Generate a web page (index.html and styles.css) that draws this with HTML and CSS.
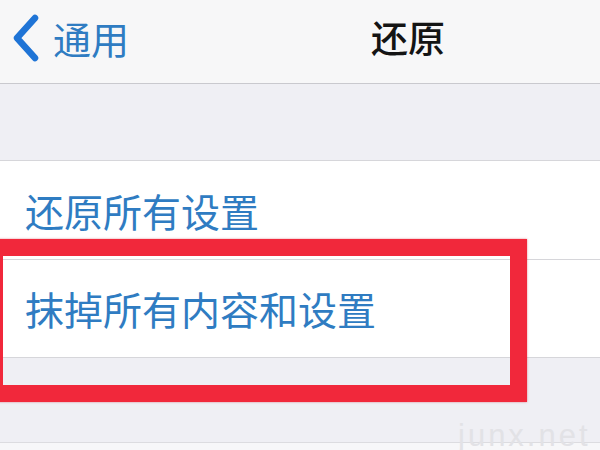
FILE: index.html
```
<!DOCTYPE html>
<html lang="zh-CN">
<head>
<meta charset="utf-8">
<title>还原</title>
<link rel="stylesheet" href="styles.css">
</head>
<body>
<div class="screen">
  <header class="nav">
    <div class="back">
      <svg class="chevron" width="30" height="48" viewBox="0 0 30 48" aria-hidden="true">
        <path d="M24 4 L6 24 L24 44" fill="none" stroke="#1f74d6" stroke-width="6.5" stroke-linecap="round" stroke-linejoin="round"/>
      </svg>
      <span class="back-text">通用</span>
    </div>
    <div class="title">还原</div>
  </header>
  <div class="gap-top"></div>
  <section class="group">
    <div class="row"><span class="row-text">还原所有设置</span></div>
    <div class="row"><span class="row-text">抹掉所有内容和设置</span></div>
  </section>
  <div class="gap-bottom"></div>
  <div class="after"></div>
  <div class="highlight"></div>
  <div class="watermark">junx.net</div>
</div>
</body>
</html>
```
FILE: styles.css
```
html, body {
  margin: 0;
  padding: 0;
}
body {
  width: 600px;
  height: 450px;
  overflow: hidden;
  background: #ffffff;
  font-family: "Noto Sans CJK SC", "Noto Sans", sans-serif;
}
.screen {
  position: relative;
  width: 600px;
  height: 450px;
  overflow: hidden;
  background: #efeff4;
}
.nav {
  box-sizing: border-box;
  height: 84px;
  border-bottom: 1px solid #c9c9ce;
  background: #f7f7f8;
  display: flex;
  align-items: center;
  padding-left: 11px;
  padding-bottom: 8px;
}
.back {
  display: flex;
  align-items: center;
  gap: 12px;
}
.chevron {
  display: block;
}
.back-text {
  color: #2f7cc2;
  font-size: 38px;
  line-height: 1;
}
.title {
  margin-left: 242px;
  color: #141414;
  font-size: 37px;
  font-weight: 500;
  line-height: 1;
}
.gap-top {
  height: 76px;
}
.group {
  background: #ffffff;
  border-top: 1px solid #d6d6da;
  border-bottom: 1px solid #d6d6da;
}
.row {
  height: 98px;
  display: flex;
  align-items: center;
  padding-left: 25px;
}
.row + .row {
  border-top: 1px solid #d6d6da;
  height: 97px;
}
.row-text {
  color: #2f7cc2;
  font-size: 39px;
  line-height: 1;
}
.gap-bottom {
  height: 84px;
  border-bottom: 1px solid #dcdce0;
}
.after {
  height: 20px;
  background: #f7f7f9;
}
.highlight {
  position: absolute;
  left: -14px;
  top: 239px;
  width: 507px;
  height: 129px;
  border: 17px solid #f1283b;
  box-shadow: 0 0 2px rgba(200, 20, 40, 0.5);
}
.watermark {
  position: absolute;
  left: 458px;
  top: 418px;
  color: #e2e2e6;
  font-family: "Liberation Sans", sans-serif;
  font-size: 31px;
  white-space: nowrap;
  letter-spacing: 3px;
}
```
